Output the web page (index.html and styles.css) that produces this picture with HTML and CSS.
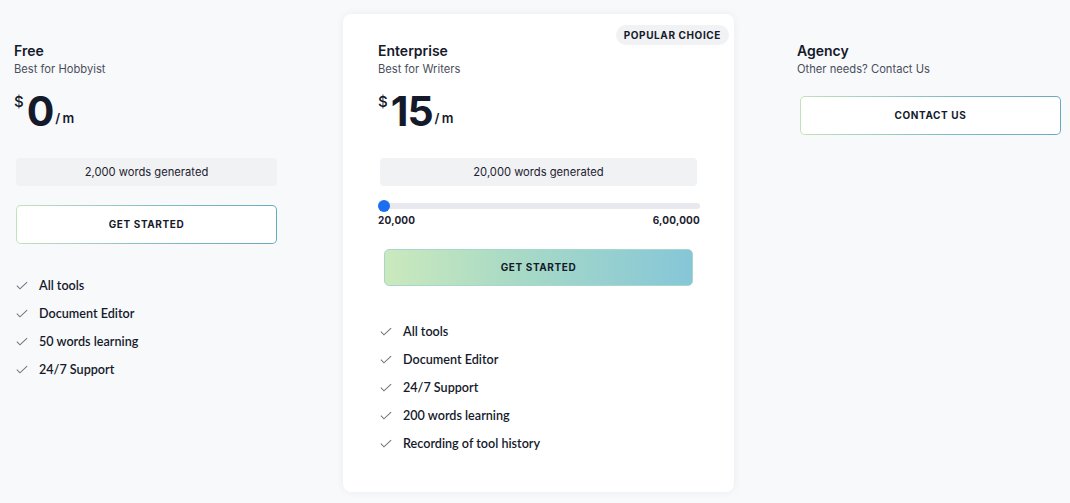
FILE: index.html
```html
<!DOCTYPE html>
<html>
<head>
<meta charset="utf-8">
<link rel="stylesheet" href="styles.css">
</head>
<body>
<div class="plans">
  <section class="plan plan-side">
    <h2 class="plan-name">Free</h2>
    <p class="plan-sub">Best for Hobbyist</p>
    <div class="price"><span class="cur">$</span><span class="amt">0</span><span class="per">/ m</span></div>
    <div class="words">2,000 words generated</div>
    <a class="btn btn-outline btn-free">GET STARTED</a>
    <ul class="features">
      <li><svg class="chk" viewBox="0 0 14 10"><path d="M1 5.2l3.6 3.6L13 1" /></svg>All tools</li>
      <li><svg class="chk" viewBox="0 0 14 10"><path d="M1 5.2l3.6 3.6L13 1" /></svg>Document Editor</li>
      <li><svg class="chk" viewBox="0 0 14 10"><path d="M1 5.2l3.6 3.6L13 1" /></svg>50 words learning</li>
      <li><svg class="chk" viewBox="0 0 14 10"><path d="M1 5.2l3.6 3.6L13 1" /></svg>24/7 Support</li>
    </ul>
  </section>

  <section class="plan plan-main">
    <span class="badge">POPULAR CHOICE</span>
    <h2 class="plan-name">Enterprise</h2>
    <p class="plan-sub">Best for Writers</p>
    <div class="price"><span class="cur">$</span><span class="amt">15</span><span class="per">/ m</span></div>
    <div class="words">20,000 words generated</div>
    <div class="slider">
      <div class="track"><span class="thumb"></span></div>
      <div class="range"><span>20,000</span><span>6,00,000</span></div>
    </div>
    <a class="btn btn-fill">GET STARTED</a>
    <ul class="features features-main">
      <li><svg class="chk" viewBox="0 0 14 10"><path d="M1 5.2l3.6 3.6L13 1" /></svg>All tools</li>
      <li><svg class="chk" viewBox="0 0 14 10"><path d="M1 5.2l3.6 3.6L13 1" /></svg>Document Editor</li>
      <li><svg class="chk" viewBox="0 0 14 10"><path d="M1 5.2l3.6 3.6L13 1" /></svg>24/7 Support</li>
      <li><svg class="chk" viewBox="0 0 14 10"><path d="M1 5.2l3.6 3.6L13 1" /></svg>200 words learning</li>
      <li><svg class="chk" viewBox="0 0 14 10"><path d="M1 5.2l3.6 3.6L13 1" /></svg>Recording of tool history</li>
    </ul>
  </section>

  <section class="plan plan-side plan-agency">
    <h2 class="plan-name">Agency</h2>
    <p class="plan-sub">Other needs? Contact Us</p>
    <a class="btn btn-outline btn-contact">CONTACT US</a>
  </section>
</div>
</body>
</html>
```

FILE: styles.css
```css
* { box-sizing: border-box; }
html, body { margin: 0; padding: 0; }
body {
  background: #f8f9fb;
  font-family: "Inter", "Noto Sans", sans-serif;
  color: #151a2b;
  width: 1070px;
  height: 503px;
  overflow: hidden;
}
.plans {
  display: flex;
  align-items: flex-start;
  padding: 14px 0 0 14px;
}
.plan { display: flex; flex-direction: column; }
.plan-side { width: 264px; padding-top: 28px; }
.plan-main {
  position: relative;
  width: 391px;
  height: 478px;
  margin-left: 65px;
  margin-right: 63px;
  background: #fff;
  border-radius: 8px;
  box-shadow: 0 0 8px rgba(30, 40, 70, 0.06);
  padding: 28px 37px 0 35px;
}
.plan-name {
  margin: 0;
  font-size: 14px;
  font-weight: 600;
  line-height: 17px;
  color: #151a2b;
}
.plan-sub {
  margin: 3px 0 0;
  font-size: 11.2px;
  line-height: 15px;
  color: #4a4f5c;
}
.price {
  display: flex;
  align-items: flex-start;
  margin-top: 15px;
  height: 40px;
}
.cur { font-size: 15px; font-weight: 500; line-height: 18px; margin-top: 1px; }
.amt { font-size: 41px; font-weight: 700; line-height: 38px; margin-left: 3px; letter-spacing: -1px; }
.per { font-size: 13px; font-weight: 600; line-height: 14px; margin-top: 19px; margin-left: 2px; word-spacing: -1px; }
.words {
  margin-top: 26px;
  margin-left: 2px;
  height: 28px;
  background: #f1f2f4;
  border-radius: 4px;
  font-size: 11.2px;
  line-height: 28px;
  text-align: center;
  color: #1e2230;
}
.plan-side .words { width: 261px; }
.plan-main .words { width: 317px; }
.btn {
  display: block;
  font-size: 10px;
  font-weight: 700;
  letter-spacing: 0.6px;
  text-align: center;
  color: #151a2b;
  border-radius: 5px;
}
.btn-outline {
  border: 1px solid transparent;
  background:
    linear-gradient(#fff, #fff) padding-box,
    linear-gradient(90deg, #c4e2bb, #7fb8c8 60%, #6aa9c3) border-box;
  height: 39px;
  line-height: 37px;
}
.btn-free { margin-top: 19px; margin-left: 2px; width: 261px; }
.btn-contact { margin-top: 19px; margin-left: 3px; width: 261px; }
.btn-fill {
  margin-top: 22px;
  margin-left: 6px;
  width: 309px;
  height: 37px;
  line-height: 35px;
  border: 1px solid #a7d6cf;
  background: linear-gradient(90deg, #cbe9bd 0%, #a6d9c6 45%, #86c6d8 100%);
}
.slider { margin-top: 14px; margin-left: 0; width: 322px; }
.track {
  position: relative;
  height: 6px;
  border-radius: 3px;
  background: #e8e9ee;
  margin-top: 3px;
}
.thumb {
  position: absolute;
  left: 0;
  top: -3px;
  width: 12px;
  height: 12px;
  border-radius: 50%;
  background: #1a6ef0;
}
.range {
  display: flex;
  justify-content: space-between;
  margin-top: 5px;
  font-size: 10px;
  font-weight: 700;
  letter-spacing: 0.2px;
  color: #1e2230;
  line-height: 13px;
}
.features {
  list-style: none;
  margin: 27px 0 0;
  padding: 0 0 0 2px;
  font-family: "Lato", "Inter", sans-serif;
  font-size: 12.6px;
  font-weight: 600;
  color: #151a2b;
}
.features li {
  display: flex;
  align-items: center;
  height: 28px;
}
.features-main { margin-top: 31px; }
.chk {
  width: 12px;
  height: 9px;
  margin-right: 11px;
  fill: none;
  stroke: #6f7480;
  stroke-width: 1.2;
}
.badge {
  position: absolute;
  top: 11px;
  right: 5px;
  height: 20px;
  padding: 0 8px;
  border-radius: 10px;
  background: #f1f2f4;
  font-size: 10px;
  font-weight: 700;
  letter-spacing: 0.6px;
  line-height: 20px;
  color: #151a2b;
}
.plan-agency { padding-top: 28px; }
```
